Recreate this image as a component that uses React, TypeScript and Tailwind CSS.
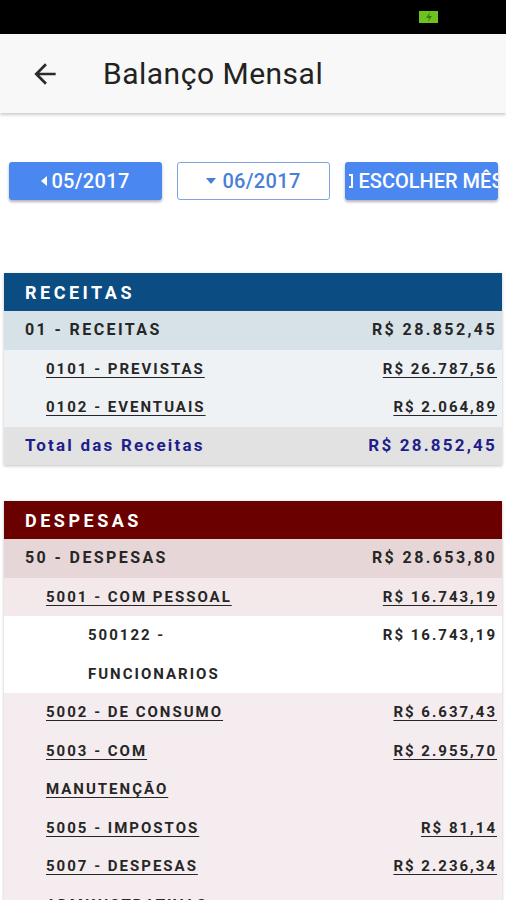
import React from "react";

type Row = {
	label: string[];
	value: string;
	level: 1 | 2 | 3;
	bg: string;
	link?: boolean;
};

const receitas: Row[] = [
	{ label: ["01 - RECEITAS"], value: "R$ 28.852,45", level: 1, bg: "bg-[#d6e1e8]" },
	{ label: ["0101 - PREVISTAS"], value: "R$ 26.787,56", level: 2, bg: "bg-[#eef2f5]", link: true },
	{ label: ["0102 - EVENTUAIS"], value: "R$ 2.064,89", level: 2, bg: "bg-[#eef2f5]", link: true },
];

const despesas: Row[] = [
	{ label: ["50 - DESPESAS"], value: "R$ 28.653,80", level: 1, bg: "bg-[#e7d6d7]" },
	{ label: ["5001 - COM PESSOAL"], value: "R$ 16.743,19", level: 2, bg: "bg-[#f3e9ea]", link: true },
	{ label: ["500122 -", "FUNCIONARIOS"], value: "R$ 16.743,19", level: 3, bg: "bg-white" },
	{ label: ["5002 - DE CONSUMO"], value: "R$ 6.637,43", level: 2, bg: "bg-[#f4ecee]", link: true },
	{ label: ["5003 - COM", "MANUTENÇÃO"], value: "R$ 2.955,70", level: 2, bg: "bg-[#f4ecee]", link: true },
	{ label: ["5005 - IMPOSTOS"], value: "R$ 81,14", level: 2, bg: "bg-[#f4ecee]", link: true },
	{ label: ["5007 - DESPESAS", "ADMINISTRATIVAS"], value: "R$ 2.236,34", level: 2, bg: "bg-[#f4ecee]", link: true },
];

const LineItem = ({ row }: { row: Row }) => {
	const pad =
		row.level === 1 ? "pl-[21px]" : row.level === 2 ? "pl-[42px]" : "pl-[84px]";
	const size =
		row.level === 1
			? "text-[16px] tracking-[2.4px]"
			: "text-[15px] tracking-[2px]";
	const text = row.link
		? "underline underline-offset-[3px] decoration-1"
		: "";
	return (
		<div className={`flex justify-between pr-[5px] ${pad} ${row.bg}`}>
			<div className="flex flex-col">
				{row.label.map((l) => (
					<span
						key={l}
						className={`h-[38.5px] leading-[38.5px] font-bold text-[#262626] ${size} ${text}`}
					>
						{l}
					</span>
				))}
			</div>
			<span
				className={`h-[38.5px] leading-[38.5px] font-bold text-[#262626] ${size} ${text}`}
			>
				{row.value}
			</span>
		</div>
	);
};

const App = () => {
	return (
		<div className="w-[506px] h-[900px] overflow-hidden bg-white font-['Roboto',sans-serif]">
			{/* status bar */}
			<div className="h-[34px] bg-black flex items-center justify-end pr-[68px]">
				<div className="w-[19px] h-[12px] bg-[#6cc21e] flex items-center justify-center">
					<svg width="8" height="10" viewBox="0 0 8 10">
						<path d="M5 0L1 6h3l-1 4 4-6H4z" fill="#3f7a10" />
					</svg>
				</div>
			</div>

			{/* app bar */}
			<div className="h-[79px] bg-[#f8f8f8] flex items-center shadow-[0_2px_3px_rgba(0,0,0,0.2)] relative">
				<svg width="32" height="32" viewBox="0 0 24 24" className="ml-[29px]">
					<path
						d="M20 11H7.83l5.59-5.59L12 4l-8 8 8 8 1.41-1.41L7.83 13H20v-2z"
						fill="#2b2b2b"
					/>
				</svg>
				<span className="ml-[42px] text-[30px] text-[#222] tracking-[0.5px]">
					Balanço Mensal
				</span>
			</div>

			{/* month buttons */}
			<div className="flex gap-[15px] pl-[9px] mt-[49px]">
				<button className="w-[153px] h-[38px] rounded-[3px] bg-[#4a87f0] text-white text-[20px] font-medium tracking-[0.3px] flex items-center justify-center gap-[4px] shadow-[0_2px_3px_rgba(0,0,0,0.3)]">
					<svg width="6" height="10" viewBox="0 0 6 10">
						<path d="M6 0v10L0 5z" fill="white" />
					</svg>
					05/2017
				</button>
				<button className="w-[153px] h-[38px] rounded-[3px] bg-white border border-[#7fa3e0] text-[#4a7fd8] text-[20px] font-medium tracking-[0.3px] flex items-center justify-center gap-[6px]">
					<svg width="10" height="6" viewBox="0 0 10 6">
						<path d="M0 0h10L5 6z" fill="#4a7fd8" />
					</svg>
					06/2017
				</button>
				<button className="w-[153px] h-[38px] rounded-[3px] bg-[#4a87f0] text-white text-[20px] font-medium flex items-center justify-center gap-[5px] overflow-hidden shadow-[0_2px_3px_rgba(0,0,0,0.3)]">
					<svg width="14" height="18" viewBox="0 0 14 18" className="shrink-0">
						<path d="M1 2h4v2H3v10h2v2H1zM13 2H9v2h2v10H9v2h4z" fill="white" />
					</svg>
					<span className="whitespace-nowrap shrink-0">ESCOLHER MÊS</span>
				</button>
			</div>

			{/* receitas */}
			<div className="mx-[4px] mt-[73px] shadow-[0_1px_3px_rgba(0,0,0,0.25)]">
				<div className="h-[38px] bg-[#0b4d82] pl-[21px] flex items-center text-white text-[18px] font-bold tracking-[3.5px]">
					RECEITAS
				</div>
				{receitas.map((r) => (
					<LineItem key={r.label[0]} row={r} />
				))}
				<div className="h-[38.5px] bg-[#e2e2e2] flex items-center justify-between pl-[21px] pr-[5px] text-[17px] font-bold tracking-[2.2px] text-[#1e1e8c]">
					<span>Total das Receitas</span>
					<span>R$ 28.852,45</span>
				</div>
			</div>

			{/* despesas */}
			<div className="mx-[4px] mt-[36px] shadow-[0_1px_3px_rgba(0,0,0,0.25)]">
				<div className="h-[38px] bg-[#6b0000] pl-[21px] flex items-center text-white text-[18px] font-bold tracking-[3.5px]">
					DESPESAS
				</div>
				{despesas.map((r) => (
					<LineItem key={r.label[0]} row={r} />
				))}
			</div>
		</div>
	);
};

export default App;
